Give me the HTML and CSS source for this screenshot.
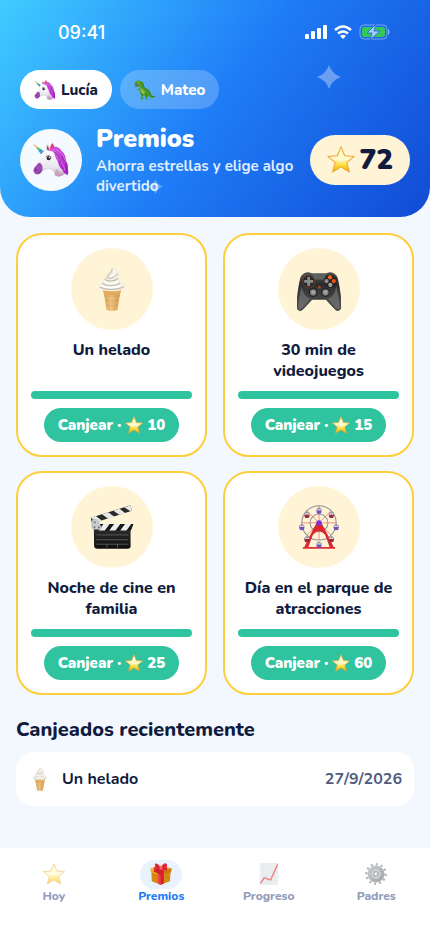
FILE: index.html
```html
<!DOCTYPE html>
<html lang="es">
<head>
  <meta charset="UTF-8" />
  <meta name="viewport" content="width=device-width, initial-scale=1.0"/>
  <title>Premios</title>
  <link rel="stylesheet" href="styles.css">
</head>
<body>
  <!-- Icon sprite -->
  <svg class="sprite" aria-hidden="true">
    <defs>
      <linearGradient id="gold" x1="0" y1="0" x2="0" y2="1">
        <stop offset="0" stop-color="#fff3b0"/>
        <stop offset="0.5" stop-color="#fffac4"/>
        <stop offset="0.75" stop-color="#ffd935"/>
        <stop offset="1" stop-color="#f7a600"/>
      </linearGradient>
      <linearGradient id="horn" x1="0" y1="0" x2="1" y2="1">
        <stop offset="0" stop-color="#f25c3c"/>
        <stop offset="0.25" stop-color="#f5b52c"/>
        <stop offset="0.5" stop-color="#35c46a"/>
        <stop offset="0.75" stop-color="#2c8fe0"/>
        <stop offset="1" stop-color="#8d4fe0"/>
      </linearGradient>
      <linearGradient id="face" x1="0" y1="0" x2="0" y2="1">
        <stop offset="0" stop-color="#ffffff"/>
        <stop offset="0.65" stop-color="#e9e6ee"/>
        <stop offset="1" stop-color="#b9a6be"/>
      </linearGradient>
      <linearGradient id="mane" x1="0" y1="0" x2="1" y2="1">
        <stop offset="0" stop-color="#d95be6"/>
        <stop offset="1" stop-color="#a51fc4"/>
      </linearGradient>
      <linearGradient id="cone" x1="0" y1="0" x2="1" y2="0">
        <stop offset="0" stop-color="#d39a4e"/>
        <stop offset="0.45" stop-color="#f3cb88"/>
        <stop offset="1" stop-color="#cf9045"/>
      </linearGradient>
      <linearGradient id="pad" x1="0" y1="0" x2="0" y2="1">
        <stop offset="0" stop-color="#5a5a5a"/>
        <stop offset="0.3" stop-color="#2c2c2c"/>
        <stop offset="1" stop-color="#5c5c5c"/>
      </linearGradient>
      <linearGradient id="slate" x1="0" y1="0" x2="0" y2="1">
        <stop offset="0" stop-color="#333333"/>
        <stop offset="1" stop-color="#0f0f0f"/>
      </linearGradient>
      <linearGradient id="steel" x1="0" y1="0" x2="1" y2="1">
        <stop offset="0" stop-color="#9a9fa3"/>
        <stop offset="1" stop-color="#5e6468"/>
      </linearGradient>
    </defs>

    <symbol id="i-star" viewBox="0 0 82 80">
      <path d="M41 2 52 29 80 31 58 49 66 77 41 62 16 77 24 49 2 31 30 29Z" fill="url(#gold)" stroke="#eda638" stroke-width="3" stroke-linejoin="round"/>
      <path d="M41 12 48 33 69 35 41 45 13 35 34 33Z" fill="#fffbd6" opacity="0.7"/>
    </symbol>

    <symbol id="i-unicorn" viewBox="0 0 108 102">
      <path d="M50 14C66 6 80 13 86 25c11 8 12 20 13 29 8 11 5 21 7 34l-2 9-7-5-15-5-18-31Z" fill="url(#mane)"/>
      <path d="M40 24C37 13 39 6 43 2c6 6 9 14 9 22Z" fill="#dcd5df"/>
      <path d="M43 22c-2-7-1-11 0-14 4 4 5 9 5 14Z" fill="#cf2f61"/>
      <path d="M31 28C44 18 62 18 74 31c10 13 8 28 12 43l8 20c-8 7-18 8-28 4-2-12-8-20-20-19-9 1-15 2-22 10-6 7-16 5-20 0-5-7-2-14 5-20 7-10 14-29 22-41Z" fill="url(#face)"/>
      <path d="M16 60c10-2 14 8 12 21l-5 9c-6 6-16 5-19-1-5-7-2-14 5-20Z" fill="#9b4bb3"/>
      <ellipse cx="8" cy="80" rx="2" ry="3" fill="#562166"/>
      <path d="M15 88q8 1 12-7" fill="none" stroke="#66307b" stroke-width="2"/>
      <path d="M72 76q3 13 21 18-8 7-19 6-8-1-9-8Z" fill="#c996b7" opacity="0.7"/>
      <path d="m0 2 33 23-9 9Z" fill="url(#horn)"/>
      <path d="m10 15 5-4M16 22l7-6M23 30l7-8" stroke="#fff" stroke-width="2" opacity="0.6"/>
      <path d="M52 20c-1-9 2-15 7-20 5 9 5 17 3 24Z" fill="#e83867"/>
      <path d="M62 16c-8-1-14 2-16 8 8-2 13 1 17 6 5 7 3 14 9 21 4 6 4 14 9 22 4 7 12 9 17 15 2-15-4-22-11-34-5-8-2-17-8-25-4-6-9-11-17-13Z" fill="url(#mane)"/>
      <path d="M61 21c11 9 22 16 23 35M70 20c17 7 26 24 26 40M70 40c13 13 23 25 26 43" fill="none" stroke="#f18bf5" stroke-width="2"/>
      <path d="M66 27c14 10 15 18 17 31M86 39c11 16 15 25 15 46" fill="none" stroke="#7b1799" stroke-width="2"/>
      <ellipse cx="47" cy="46" rx="6" ry="6" fill="#2c2029"/>
      <path d="M38 41q9-7 17 2" fill="none" stroke="#3a2a38" stroke-width="2"/>
      <circle cx="49" cy="44" r="2" fill="#fff"/>
    </symbol>

    <symbol id="i-dino" viewBox="0 0 66 58">
      <path d="M2 8C3 3 9 0 17 1c7 1 11 5 12 11 0 7 2 10 8 12 9 3 12 8 13 15 3 7 8 10 16 9-8 7-18 5-23-1l-4 3 2 5c2 0 4 1 4 2H34l-1-9-5-3-2 4 3 7-1 1h-9l2-4 1-9c-5-4-6-10-3-17l-8 2-2 3-1-4 9-5 1-5-10 2C2 21 0 18 3 16l8-2-9-2Z" fill="#4d9b2d"/>
      <path d="M19 21c2 8 1 17 7 20 6 4 9-2 6-7-4-6-6-6-13-13Z" fill="#90bd4c"/>
      <path d="M23 6c6 6 3 11 9 17 6 6 12 6 15 17 2 6 8 11 14 9" fill="none" stroke="#286b1d" stroke-width="2"/>
      <path d="m3 12 12 2-11 2" fill="#983b34"/>
      <circle cx="14" cy="6" r="2" fill="#e7c642"/>
      <path d="m31 38 7 4 1 8M24 39l2 7" fill="none" stroke="#276b20" stroke-width="2"/>
    </symbol>

    <symbol id="i-helado" viewBox="0 0 80 130">
      <path d="M14 66h52l-6 35-4 26q-16 6-32 0l-4-26Z" fill="url(#cone)"/>
      <path d="M13 65h54l-3 15q-24 8-48 0Z" fill="#e6ac5c"/>
      <path d="M18 84q22 7 44 0M20 98q20 5 40 0M23 113q17 4 34 0M31 72l1 54M40 72v56M50 72l-2 54" fill="none" stroke="#c08240" stroke-width="1" opacity="0.7"/>
      <path d="M27 0c19 0 34 9 34 23 0 5-1 8-3 11 8 3 11 8 8 15 7 0 12 4 12 10-3 9-19 13-38 13S4 68 1 60c-2-6 3-10 10-13-2-7 2-12 9-15-1-6 3-11 8-14 7-4 11-7 10-11-2-4-6-6-11-7Z" fill="#f1eee6"/>
      <path d="M40 6c4 12-15 13-14 25 6 6 22-1 31-11M19 34c4 11 28 9 39 0M11 48c13 11 40 8 53 0M4 60c19 9 52 9 72-2" fill="none" stroke="#c5bba8" stroke-width="3"/>
      <path d="M45 9c8 9 0 16-9 20M17 41c9 10 31 9 41 0M8 54c17 9 41 8 58 0" fill="none" stroke="#fff" stroke-width="4"/>
    </symbol>

    <symbol id="i-mando" viewBox="0 -16 128 128">
      <path d="M24 2q9-4 20 2h40q11-6 20-2c10 4 13 11 15 21 5 21 9 55 9 75 0 13-10 16-17 9L84 78H44l-27 29c-7 7-17 4-17-9C0 78 4 44 9 23 11 13 14 6 24 2Z" fill="url(#pad)" stroke="#222" stroke-width="2"/>
      <path d="M14 40C8 64 4 83 4 98c0 9 6 9 12 3l22-25Q18 70 14 40ZM114 40c6 24 10 43 10 58 0 9-6 9-12 3L90 76q20-6 24-36Z" fill="#777" opacity="0.65"/>
      <path d="M45 3h38l-4 17H49Z" fill="#5e6260"/>
      <circle cx="34" cy="26" r="18" fill="#292929" stroke="#7d462d" stroke-width="2"/>
      <path d="M30 13h8v9h9v8h-9v9h-8v-9h-9v-8h9Z" fill="#8b8d8d"/>
      <circle cx="97" cy="25" r="19" fill="#252525"/>
      <circle cx="96" cy="14" r="6" fill="#ff671c"/>
      <circle cx="107" cy="25" r="6" fill="#f95216"/>
      <circle cx="86" cy="25" r="6" fill="#909090"/>
      <circle cx="97" cy="36" r="6" fill="#a1a1a1"/>
      <circle cx="65" cy="43" r="4" fill="#a94622"/>
      <g fill="#777b7b" stroke="#171717" stroke-width="3">
        <circle cx="47" cy="58" r="11"/>
        <circle cx="83" cy="58" r="11"/>
      </g>
      <circle cx="47" cy="57" r="6" fill="#a0a4a4"/>
      <circle cx="83" cy="57" r="6" fill="#a0a4a4"/>
    </symbol>

    <symbol id="i-claqueta" viewBox="0 0 126 128">
      <path d="m1 37 116-36 4 16L5 54Z" fill="#292929"/>
      <path d="m1 37 15-5 17 13-16 5ZM34 27l18-6 18 13-18 6ZM67 17l18-6 17 13-17 5ZM99 7l18-6 4 16-4 1Z" fill="#e8e8e8"/>
      <path d="M10 55h115l-8 20v45q0 7-8 7H20q-8 0-9-8Z" fill="url(#slate)"/>
      <path d="M12 55h113l-7 19H12Z" fill="#191919"/>
      <path d="m38 55-14 19h18l14-19ZM69 55 55 74h18l14-19ZM101 55 87 74h18l14-19Z" fill="#eee"/>
      <path d="M5 44c8-5 17-2 20 6l8 16-7 5H8L4 63Z" fill="#c9cccd" stroke="#929698" stroke-width="1"/>
      <circle cx="13" cy="50" r="3" fill="#777"/>
      <circle cx="25" cy="65" r="3" fill="#777"/>
      <circle cx="12" cy="65" r="3" fill="#777"/>
      <path d="M17 87h94M17 101h94M17 114h94M48 114v10M79 114v10" stroke="#6d7173" stroke-width="2"/>
    </symbol>

    <symbol id="i-cabina" viewBox="0 0 18 20">
      <path d="M1 7q8-11 16 0v3H1Z" fill="#9a8f9f"/>
      <path d="M4 6h4v5H4ZM10 6h4v5h-4Z" fill="#eee"/>
      <path d="M1 10h16l-2 8q-6 3-12 0Z" fill="currentColor"/>
    </symbol>

    <symbol id="i-noria" viewBox="0 0 118 128">
      <g fill="none" stroke="#8e9494" stroke-width="3">
        <circle cx="59" cy="52" r="50"/>
        <circle cx="59" cy="52" r="26"/>
      </g>
      <path d="M59 2v100M9 52h100M24 17l70 70M94 17 24 87" stroke="#e46460" stroke-width="2"/>
      <path d="M54 49h10l14 25 25 51H91L77 87q-18-22-36 0l-14 38H15l25-51Z" fill="#d8292f"/>
      <path d="M12 125h94" stroke="#e22c36" stroke-width="5"/>
      <circle cx="59" cy="52" r="8" fill="#7b35d5"/>
      <g color="#7550bb">
        <use href="#i-cabina" x="50" y="6" width="18" height="20"/>
        <use href="#i-cabina" x="0" y="54" width="18" height="20"/>
        <use href="#i-cabina" x="100" y="54" width="18" height="20"/>
        <use href="#i-cabina" x="50" y="105" width="18" height="20"/>
      </g>
      <g color="#9c2940">
        <use href="#i-cabina" x="15" y="18" width="18" height="20"/>
        <use href="#i-cabina" x="86" y="18" width="18" height="20"/>
        <use href="#i-cabina" x="15" y="89" width="18" height="20"/>
        <use href="#i-cabina" x="86" y="89" width="18" height="20"/>
      </g>
    </symbol>

    <symbol id="i-regalo" viewBox="0 0 64 64">
      <path d="m4 23 27 9v31L5 53ZM60 23l-29 9v31l27-10Z" fill="#d48a12"/>
      <path d="m1 15 30-8 32 8-2 12-30 9L2 26Z" fill="#eeb22e"/>
      <path d="m31 26 32-11-2 12-30 9Z" fill="#c8790b"/>
      <path d="m13 16 9-3 18 8v39l-9 3-7-3V31l-14-6Z" fill="#d5202c"/>
      <path d="m22 31 9 4v28l-7-3Z" fill="#ef4148"/>
      <path d="M31 14C25-2 10-3 15 11l-5 3 5 8 15-3 7 4 14-3-2-8C54-1 39-5 31 14Z" fill="#e72f3c"/>
      <path d="m17 7 12 8-12 5M47 6l-12 9 13 4" fill="none" stroke="#9f1424" stroke-width="2"/>
      <circle cx="32" cy="14" r="5" fill="#ff6368"/>
    </symbol>

    <symbol id="i-grafica" viewBox="0 0 54 64">
      <path d="M0 0h54v64H0Z" fill="#dce3e7"/>
      <path d="M0 13h54M0 26h54M0 39h54M0 52h54M11 0v64M22 0v64M33 0v64M44 0v64" stroke="#c5d0d6" stroke-width="1"/>
      <path d="m2 59 11-16 19 6L52 4" fill="none" stroke="#e21c1c" stroke-width="4"/>
    </symbol>

    <symbol id="i-ajustes" viewBox="0 0 66 66">
      <circle cx="33" cy="33" r="29" fill="none" stroke="#72787c" stroke-width="7" stroke-dasharray="6 9"/>
      <circle cx="33" cy="33" r="19" fill="#c3c7ca" stroke="url(#steel)" stroke-width="13"/>
      <circle cx="33" cy="33" r="14" fill="#b9bdc0" stroke="#81878b" stroke-width="2"/>
      <circle cx="33" cy="33" r="7" fill="#fff" stroke="#666c70" stroke-width="4"/>
      <path d="M34 33h6M31 28l-3-4M31 38l-3 4" stroke="#666c70" stroke-width="3"/>
    </symbol>

    <symbol id="i-destello" viewBox="0 0 24 24">
      <path d="M12 0q3 9 12 12-9 3-12 12-3-9-12-12 9-3 12-12Z" fill="currentColor"/>
    </symbol>
  </svg>

  <header>
    <div class="status-bar">
      <span class="time">09:41</span>
      <div class="status-icons">
        <svg width="22" height="14" viewBox="0 0 22 14" fill="#fff" aria-label="Cobertura">
          <rect x="0" y="9" width="4" height="5" rx="1"/>
          <rect x="6" y="6" width="4" height="8" rx="1"/>
          <rect x="12" y="3" width="4" height="11" rx="1"/>
          <rect x="18" y="0" width="4" height="14" rx="1"/>
        </svg>
        <svg width="18" height="14" viewBox="0 0 18 14" fill="none" stroke="#fff" stroke-width="2.5" aria-label="Wi-Fi">
          <path d="M1 5q8-7 16 0M4 8.500q5-4 10 0"/>
          <path d="M9 14 6 11q3-2.500 6 0Z" fill="#fff" stroke="none"/>
        </svg>
        <svg width="31" height="16" viewBox="0 0 31 16" aria-label="Batería">
          <rect x="1" y="1" width="27" height="14" rx="4" fill="none" stroke="#fff" stroke-opacity="0.4"/>
          <path d="M29 5q3 3 0 6Z" fill="#fff" opacity="0.5"/>
          <rect x="3" y="3" width="23" height="10" rx="2" fill="#34c759"/>
          <path d="M17 0 8 9h5l-2 7 10-9h-6Z" fill="#a9cdf8" stroke="#2874da" stroke-width="1"/>
        </svg>
      </div>
    </div>

    <div class="profiles">
      <button class="profile active"><svg width="22" height="20"><use href="#i-unicorn"/></svg>Lucía</button>
      <button class="profile"><svg width="22" height="20"><use href="#i-dino"/></svg>Mateo</button>
    </div>

    <div class="hero">
      <div class="avatar"><svg width="36" height="34"><use href="#i-unicorn"/></svg></div>
      <div class="hero-text">
        <h1>Premios</h1>
        <p>Ahorra estrellas y elige algo divertido</p>
      </div>
      <div class="balance"><svg width="28" height="27"><use href="#i-star"/></svg>72</div>
    </div>

    <svg class="sparkle sparkle-big"><use href="#i-destello"/></svg>
    <svg class="sparkle sparkle-small"><use href="#i-destello"/></svg>
  </header>

  <main>
    <div class="grid">
      <article class="reward-card">
        <div class="reward-icon"><svg width="44" height="44"><use href="#i-helado"/></svg></div>
        <h3>Un helado</h3>
        <div class="progress"></div>
        <button class="redeem-btn">Canjear · <svg width="18" height="18"><use href="#i-star"/></svg> 10</button>
      </article>

      <article class="reward-card">
        <div class="reward-icon"><svg width="44" height="44"><use href="#i-mando"/></svg></div>
        <h3>30 min de videojuegos</h3>
        <div class="progress"></div>
        <button class="redeem-btn">Canjear · <svg width="18" height="18"><use href="#i-star"/></svg> 15</button>
      </article>

      <article class="reward-card">
        <div class="reward-icon"><svg width="44" height="44"><use href="#i-claqueta"/></svg></div>
        <h3>Noche de cine en familia</h3>
        <div class="progress"></div>
        <button class="redeem-btn">Canjear · <svg width="18" height="18"><use href="#i-star"/></svg> 25</button>
      </article>

      <article class="reward-card">
        <div class="reward-icon"><svg width="44" height="44"><use href="#i-noria"/></svg></div>
        <h3>Día en el parque de atracciones</h3>
        <div class="progress"></div>
        <button class="redeem-btn">Canjear · <svg width="18" height="18"><use href="#i-star"/></svg> 60</button>
      </article>
    </div>

    <h2>Canjeados recientemente</h2>
    <div class="history-row">
      <svg width="24" height="24"><use href="#i-helado"/></svg>
      <span class="history-name">Un helado</span>
      <time datetime="2026-09-27">27/9/2026</time>
    </div>
  </main>

  <nav>
    <a href="#hoy"><span class="tab-icon"><svg width="22" height="22"><use href="#i-star"/></svg></span>Hoy</a>
    <a href="#premios" class="active"><span class="tab-icon"><svg width="22" height="22"><use href="#i-regalo"/></svg></span>Premios</a>
    <a href="#progreso"><span class="tab-icon"><svg width="22" height="22"><use href="#i-grafica"/></svg></span>Progreso</a>
    <a href="#padres"><span class="tab-icon"><svg width="22" height="22"><use href="#i-ajustes"/></svg></span>Padres</a>
  </nav>
</body>
</html>
```
FILE: styles.css
```css
* {
  box-sizing: border-box;
}

body {
  margin: 0;
  min-height: 100vh;
  display: flex;
  flex-direction: column;
  font-family: Nunito, Lato, sans-serif;
  background-color: #f3f8ff;
  color: #101b3d;
}

h1, h2, h3, p {
  margin: 0;
}

button {
  font-family: inherit;
  border: none;
  cursor: pointer;
}

svg {
  display: block;
  flex-shrink: 0;
}

.sprite {
  position: absolute;
  width: 0;
  height: 0;
}

header {
  position: relative;
  padding: 16px 20px 21px;
  border-radius: 0 0 30px 30px;
  background: linear-gradient(125deg, #40ccff 0%, #1f7cf7 50%, #114bd4 100%);
  color: #fff;
}

.status-bar {
  display: flex;
  justify-content: space-between;
  align-items: center;
  height: 32px;
  padding: 0 20px 0 38px;
}

.time {
  font-family: Inter, sans-serif;
  font-size: 18px;
  font-weight: 500;
}

.status-icons {
  display: flex;
  align-items: center;
  gap: 7px;
}

.profiles {
  display: flex;
  gap: 8px;
  margin-top: 22px;
}

.profile {
  display: flex;
  align-items: center;
  gap: 5px;
  height: 39px;
  padding: 0 14px;
  border-radius: 20px;
  background-color: rgba(255, 255, 255, 0.22);
  color: #fff;
  font-size: 15px;
  font-weight: 800;
}

.profile.active {
  background-color: #fff;
  color: #101b3d;
}

.hero {
  display: flex;
  align-items: center;
  gap: 14px;
  margin-top: 14px;
}

.avatar {
  display: flex;
  align-items: center;
  justify-content: center;
  flex-shrink: 0;
  width: 62px;
  height: 62px;
  border-radius: 50%;
  background-color: #f5faff;
}

.hero-text {
  flex: 1;
}

h1 {
  font-size: 25px;
  font-weight: 900;
  line-height: 33px;
}

.hero-text p {
  font-size: 15px;
  font-weight: 700;
  line-height: 20px;
  color: #dfedff;
}

.balance {
  display: flex;
  align-items: center;
  gap: 4px;
  height: 50px;
  padding: 0 17px;
  border-radius: 25px;
  background-color: #fff4d6;
  color: #101b3d;
  font-size: 28px;
  font-weight: 900;
}

.sparkle {
  position: absolute;
  color: #fff;
}

.sparkle-big {
  top: 65px;
  right: 89px;
  width: 24px;
  height: 24px;
  opacity: 0.35;
}

.sparkle-small {
  top: 179px;
  left: 148px;
  width: 15px;
  height: 15px;
  opacity: 0.3;
}

main {
  flex: 1;
  padding: 16px;
}

.grid {
  display: grid;
  grid-template-columns: 1fr 1fr;
  gap: 14px 16px;
}

.reward-card {
  display: flex;
  flex-direction: column;
  align-items: center;
  gap: 9px;
  padding: 13px;
  border: 2px solid #ffce3d;
  border-radius: 26px;
  background-color: #fff;
}

.reward-icon {
  display: flex;
  align-items: center;
  justify-content: center;
  width: 82px;
  height: 82px;
  margin-bottom: 1px;
  border-radius: 50%;
  background-color: #fff4d6;
}

h3 {
  min-height: 42px;
  font-size: 16px;
  font-weight: 800;
  line-height: 21px;
  text-align: center;
}

.progress {
  width: 100%;
  height: 8px;
  border-radius: 4px;
  background-color: #2fc49f;
}

.redeem-btn {
  display: flex;
  align-items: center;
  gap: 4px;
  height: 34px;
  padding: 0 14px;
  border-radius: 17px;
  background-color: #2fc49f;
  color: #fff;
  font-size: 15px;
  font-weight: 900;
}

h2 {
  margin: 22px 0 9px;
  font-size: 20px;
  font-weight: 800;
  line-height: 26px;
}

.history-row {
  display: flex;
  align-items: center;
  gap: 10px;
  height: 54px;
  padding: 0 12px;
  border-radius: 18px;
  background-color: #fff;
  font-size: 16px;
  font-weight: 700;
}

.history-name {
  flex: 1;
}

time {
  color: #4f5d82;
}

nav {
  display: grid;
  grid-template-columns: repeat(4, 1fr);
  padding: 12px 0 30px;
  background-color: #fff;
}

nav a {
  display: flex;
  flex-direction: column;
  align-items: center;
  color: #929dbb;
  font-size: 12px;
  font-weight: 800;
  line-height: 15px;
  text-decoration: none;
}

.tab-icon {
  padding: 3px 10px 4px;
  border-radius: 15px;
}

.tab-icon svg {
  opacity: 0.55;
}

nav .active {
  color: #1f7cf7;
}

nav .active .tab-icon {
  background-color: #e8f3ff;
}

nav .active svg {
  opacity: 1;
}
```
